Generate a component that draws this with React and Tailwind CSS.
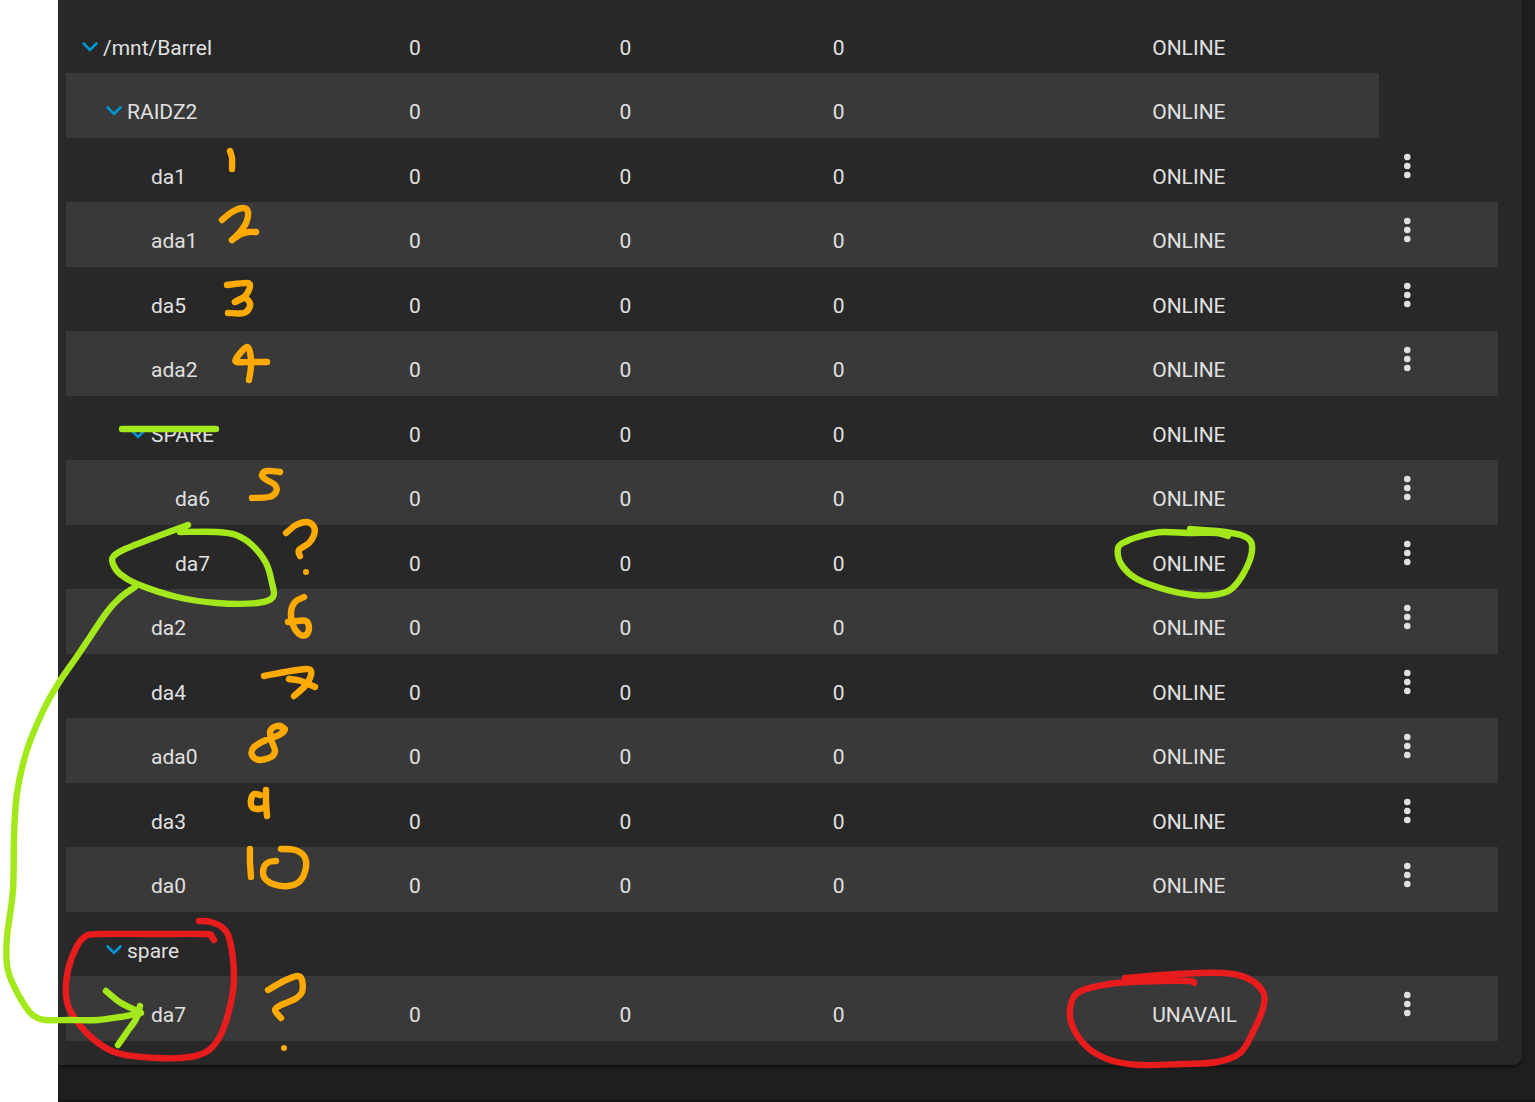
import { useState } from "react";

const disks = [
    { name: "/mnt/Barrel", depth: 0, group: true, status: "ONLINE" },
    { name: "RAIDZ2", depth: 1, group: true, status: "ONLINE" },
    { name: "da1", depth: 2, status: "ONLINE" },
    { name: "ada1", depth: 2, status: "ONLINE" },
    { name: "da5", depth: 2, status: "ONLINE" },
    { name: "ada2", depth: 2, status: "ONLINE" },
    { name: "SPARE", depth: 2, group: true, status: "ONLINE" },
    { name: "da6", depth: 3, status: "ONLINE" },
    { name: "da7", depth: 3, status: "ONLINE", mark: "online" },
    { name: "da2", depth: 2, status: "ONLINE" },
    { name: "da4", depth: 2, status: "ONLINE" },
    { name: "ada0", depth: 2, status: "ONLINE" },
    { name: "da3", depth: 2, status: "ONLINE" },
    { name: "da0", depth: 2, status: "ONLINE" },
    { name: "spare", depth: 1, group: true, hideStats: true },
    { name: "da7", depth: 2, status: "UNAVAIL", mark: "unavail" },
];

// each level moves the name 24px to the right
const groupIndent = ["pl-4", "pl-10", "pl-16"];
const leafIndent = ["pl-[37px]", "pl-[61px]", "pl-[85px]", "pl-[109px]"];

const orange = [
    [[230, 151], [232, 158], [232, 169]],
    [[222, 220], [232, 212], [243, 208], [248, 212], [246, 223], [240, 232], [232, 240]],
    [[232, 240], [241, 234], [249, 232], [256, 232]],
    [[227, 285], [246, 283], [250, 285], [248, 292], [243, 298], [235, 302]],
    [[235, 302], [243, 298], [248, 300], [250, 306], [244, 313], [228, 313]],
    [[267, 362], [250, 362], [237, 362], [236, 359], [242, 351], [247, 347], [250, 352], [251, 366], [249, 380]],
    [[280, 472], [267, 471], [262, 475], [265, 479], [275, 485], [276, 492], [269, 497], [252, 498]],
    [[286, 533], [296, 525], [307, 522], [314, 527], [314, 535], [309, 543], [299, 550], [300, 556]],
    [[304, 597], [295, 602], [291, 612], [293, 625], [299, 634], [306, 635], [309, 628], [306, 621], [297, 621], [288, 622]],
    [[264, 676], [285, 672], [306, 669], [311, 671], [310, 678], [305, 686], [294, 696]],
    [[289, 679], [301, 681], [315, 687]],
    [[284, 730], [281, 726], [274, 727], [270, 732], [272, 742], [275, 751], [271, 757], [259, 760], [252, 755], [254, 747], [266, 740], [279, 735], [285, 729], [278, 726]],
    [[260, 795], [254, 794], [251, 800], [252, 807], [257, 809], [263, 808]],
    [[266, 790], [266, 802], [267, 816]],
    [[250, 849], [250, 862], [251, 877]],
    [[281, 849], [295, 850], [304, 856], [306, 867], [300, 881], [288, 886], [273, 884], [264, 877], [264, 867], [269, 862], [276, 861]],
    [[268, 990], [284, 981], [297, 976], [302, 980], [302, 992], [295, 999], [281, 1005], [275, 1010], [281, 1018]],
];

const green = [
    [[122, 429], [169, 429], [216, 429]],
    [[188, 525], [153, 538], [123, 550], [113, 557], [113, 564], [120, 574], [137, 584], [177, 597], [217, 603], [257, 603], [273, 597], [272, 583], [266, 563], [252, 545], [236, 535], [217, 532], [180, 532]],
    [[135, 587], [121, 597], [107, 612], [80, 652], [58, 684], [43, 711], [27, 750], [17, 793], [14, 837], [13, 890], [7, 937], [7, 965], [12, 982], [25, 1006], [34, 1016], [45, 1020], [70, 1020], [98, 1020], [120, 1017], [141, 1013]],
    [[106, 991], [121, 1003], [140, 1012]],
    [[140, 1006], [136, 1019], [127, 1032], [118, 1045]],
];

const red = [
    [[199, 921], [211, 922], [223, 928], [230, 941], [234, 975], [231, 1002], [222, 1032], [209, 1050], [190, 1057], [157, 1058], [117, 1053], [92, 1038], [72, 1014], [66, 996], [68, 970], [77, 946], [86, 936], [98, 934], [150, 934], [205, 934], [211, 936], [214, 940]],
];

const onlineRing = [
    [[1190, 529], [1217, 531], [1241, 535], [1251, 542], [1251, 556], [1242, 576], [1230, 590], [1213, 595], [1193, 595], [1167, 590], [1137, 579], [1121, 564], [1118, 548], [1127, 541], [1145, 535], [1163, 532], [1190, 533], [1217, 533], [1228, 536]],
];

const unavailRing = [
    [[1125, 978], [1177, 974], [1223, 973], [1247, 978], [1263, 992], [1263, 1008], [1253, 1032], [1240, 1053], [1217, 1062], [1183, 1064], [1140, 1065], [1110, 1060], [1087, 1047], [1072, 1025], [1071, 1004], [1081, 991], [1117, 983], [1160, 981], [1190, 981], [1194, 983]],
];

// turns pen points into a rounded curve that goes through all of them
function toCurve(points) {
    let d = `M${points[0][0]} ${points[0][1]}`;
    for (let i = 0; i < points.length - 1; i++) {
        const p0 = points[i - 1] || points[i];
        const p1 = points[i];
        const p2 = points[i + 1];
        const p3 = points[i + 2] || p2;
        d += `C${p1[0] + (p2[0] - p0[0]) / 6} ${p1[1] + (p2[1] - p0[1]) / 6} ${p2[0] - (p3[0] - p1[0]) / 6} ${p2[1] - (p3[1] - p1[1]) / 6} ${p2[0]} ${p2[1]}`;
    }
    return d;
}

function Ink({ strokes, color }) {
    return (
        <g fill="none" stroke={color} strokeWidth="6.4" strokeLinecap="round" strokeLinejoin="round">
            {strokes.map((points, i) => (
                <path key={i} d={toCurve(points)} />
            ))}
        </g>
    );
}

function StatusMark({ type }) {
    if (type === "online") {
        return (
            <svg className="pointer-events-none absolute -top-[5px] -left-[42px] z-10 h-[84px] w-[150px] max-w-none" viewBox="1110 520 150 84" aria-hidden="true">
                <Ink strokes={onlineRing} color="#a2e81b" />
            </svg>
        );
    }
    return (
        <svg className="pointer-events-none absolute -top-3 -left-[90px] z-10 h-[108px] w-[210px] max-w-none" viewBox="1062 964 210 108" aria-hidden="true">
            <Ink strokes={unavailRing} color="#e81c1c" />
        </svg>
    );
}

function Chevron() {
    return (
        <svg className="h-4 w-4 shrink-0" viewBox="0 0 16 16" fill="none" stroke="#0095d5" strokeWidth="2.6" aria-hidden="true">
            <path d="M0.9 2.7 8 9.8 15.1 2.7" />
        </svg>
    );
}

function DiskRow({ disk }) {
    const [open, setOpen] = useState(true);
    const cell = "p-0 pt-[27px] align-top font-normal";

    return (
        <tr className="h-16 even:h-[65px]">
            <th scope="row" className={`${cell} text-left`}>
                {disk.group ? (
                    <button
                        type="button"
                        aria-expanded={open}
                        onClick={() => setOpen(!open)}
                        className={`flex items-center gap-[5px] ${groupIndent[disk.depth]}`}
                    >
                        <Chevron />
                        {disk.name}
                    </button>
                ) : (
                    <span className={leafIndent[disk.depth]}>{disk.name}</span>
                )}
            </th>
            <td className={cell}>{!disk.hideStats && 0}</td>
            <td className={cell}>{!disk.hideStats && 0}</td>
            <td className={cell}>{!disk.hideStats && 0}</td>
            <td className={`${cell} relative`}>
                {disk.status}
                {disk.mark && <StatusMark type={disk.mark} />}
            </td>
            {!disk.group && (
                <td className="p-0 pt-4 pl-4 align-top">
                    <button type="button" aria-label={`Options for ${disk.name}`} className="flex h-6 w-6 items-center justify-center">
                        <svg className="h-6 w-2 overflow-visible" viewBox="0 0 8 24" fill="#e0e0e0" aria-hidden="true">
                            <circle cx="4.3" cy="3" r="3.3" />
                            <circle cx="4.3" cy="12" r="3.3" />
                            <circle cx="4.3" cy="21" r="3.3" />
                        </svg>
                    </button>
                </td>
            )}
        </tr>
    );
}

export default function App() {
    return (
        <div className="relative min-h-screen bg-white pl-[58px] font-[Roboto,sans-serif]">
            <main className="min-h-screen overflow-hidden border-b-2 border-[#191519] bg-[#1e1e1e] pr-[13px]">
                <section className="rounded-br-[9px] bg-[#282828] pt-[9px] pr-6 pb-6 pl-2 shadow-[0_2px_3px_rgba(0,0,0,0.5)]">
                    <table className="w-full table-fixed border-collapse text-[21px] leading-6 text-[#e0e0e0] [&_tr:nth-child(even)>*]:bg-[#393939]">
                        <colgroup>
                            <col className="w-[343px]" />
                            <col className="w-[14.7%]" />
                            <col className="w-[14.9%]" />
                            <col className="w-[22.3%]" />
                            <col />
                            <col className="w-[119px]" />
                        </colgroup>
                        <tbody>
                            {disks.map((disk, i) => (
                                <DiskRow key={i} disk={disk} />
                            ))}
                        </tbody>
                    </table>
                </section>
            </main>

            {/* Pen notes over the device names */}
            <svg className="pointer-events-none absolute top-0 left-0 z-20 h-[1102px] w-80" viewBox="0 0 320 1102" aria-hidden="true">
                <Ink strokes={red} color="#e81c1c" />
                <Ink strokes={orange} color="#ffaa00" />
                <circle cx="306" cy="572" r="3" fill="#ffaa00" />
                <circle cx="284" cy="1048" r="3" fill="#ffaa00" />
                <Ink strokes={green} color="#a2e81b" />
            </svg>
        </div>
    );
}
